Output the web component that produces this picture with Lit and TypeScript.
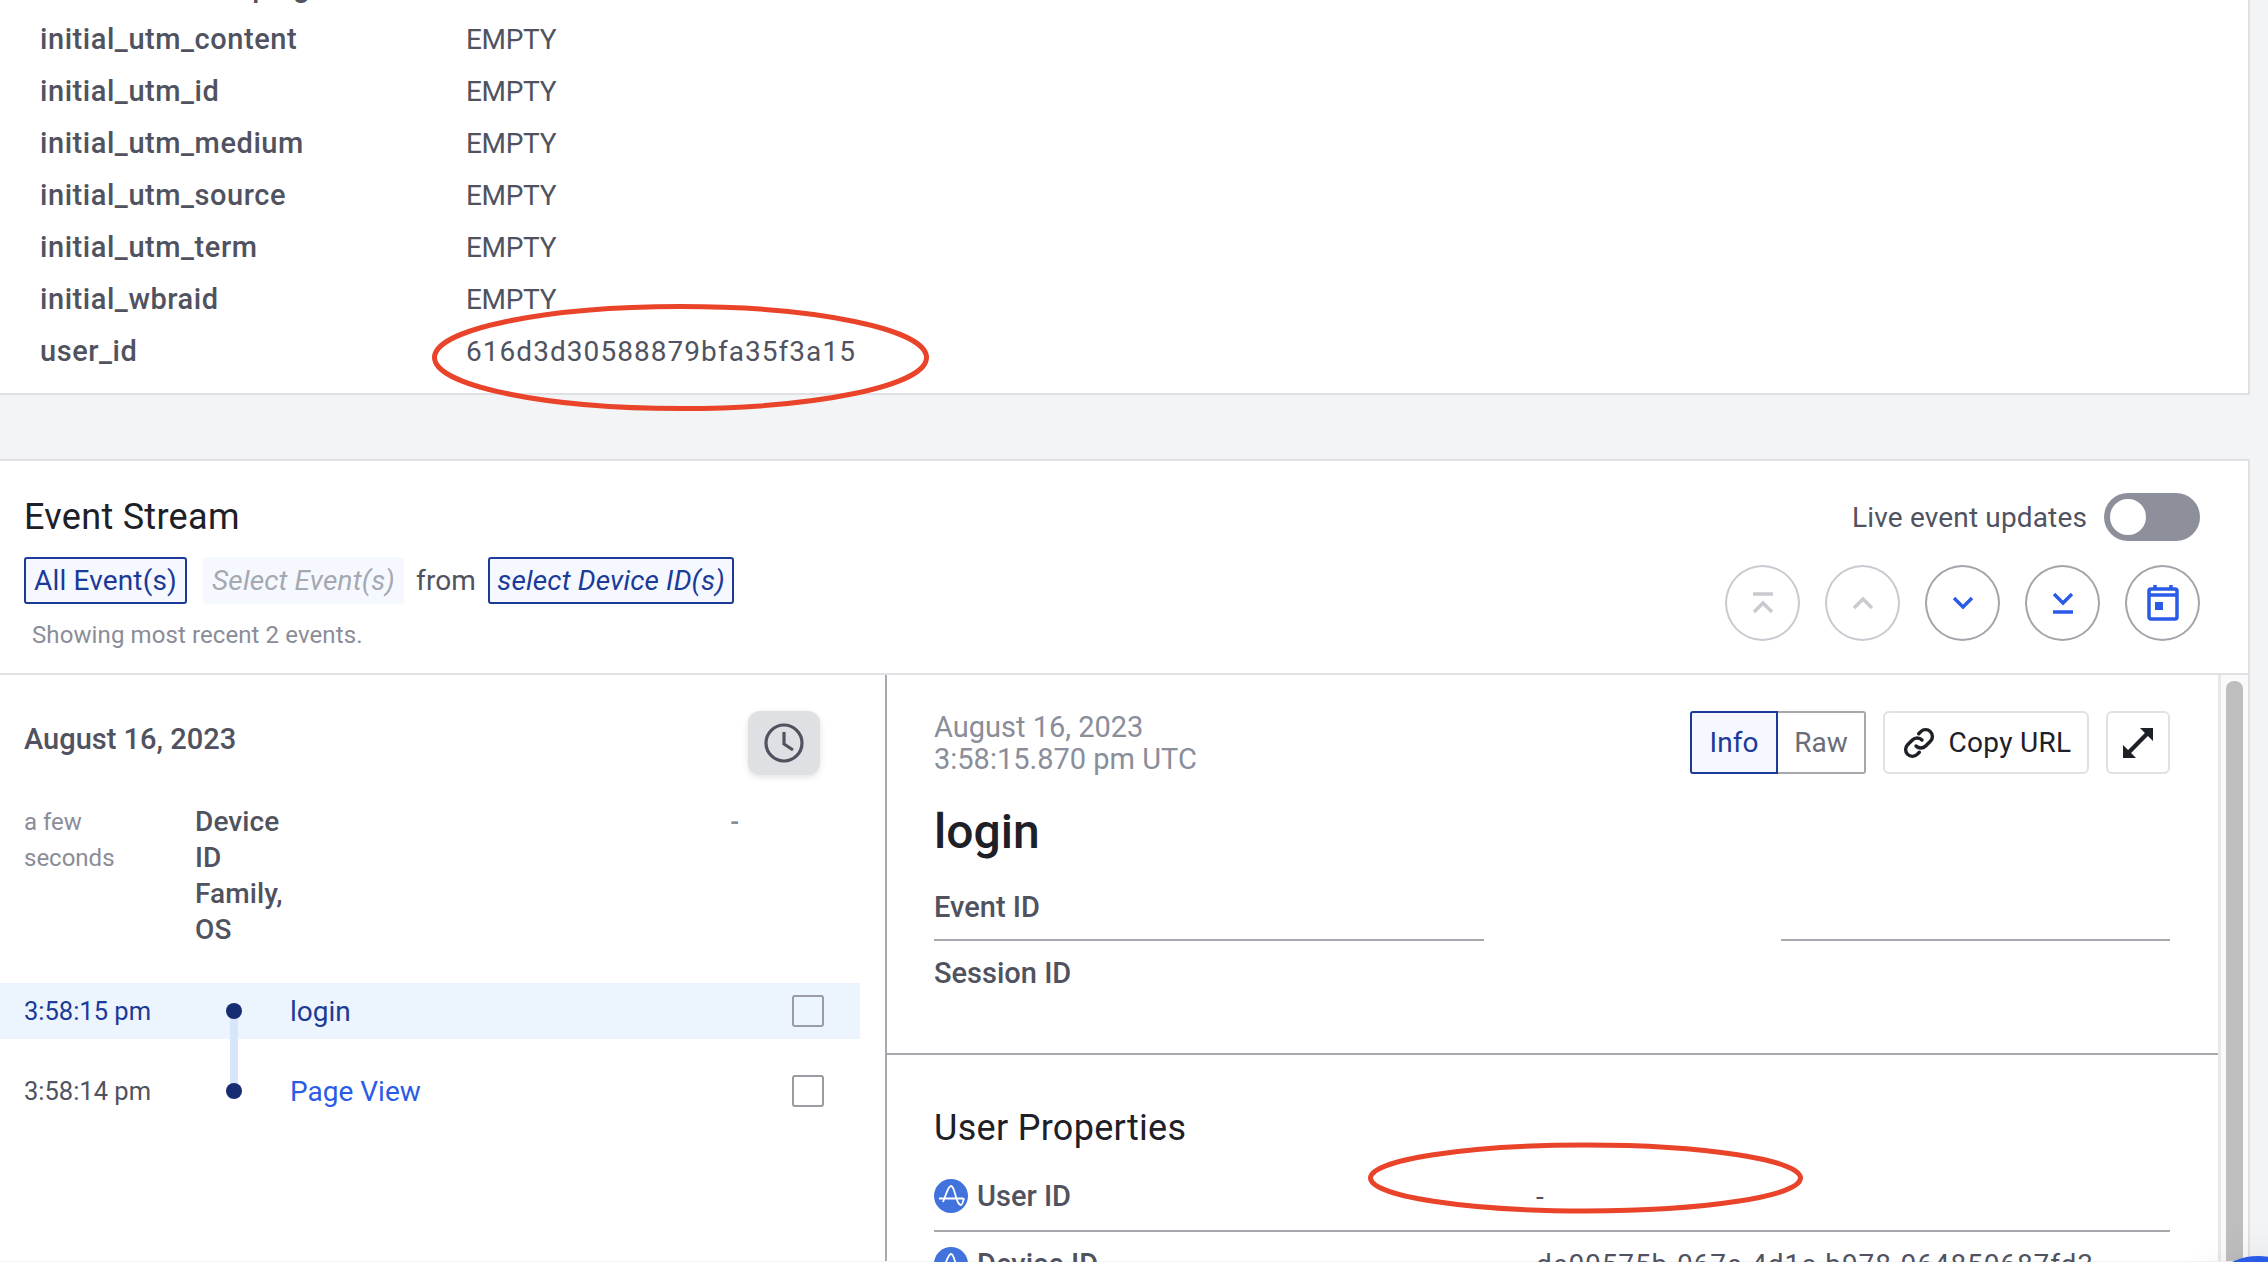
import { LitElement, html, css, svg } from "lit";
import { customElement } from "lit/decorators.js";

const rows: [string, string][] = [
  ["initial_utm_campaign", "EMPTY"],
  ["initial_utm_content", "EMPTY"],
  ["initial_utm_id", "EMPTY"],
  ["initial_utm_medium", "EMPTY"],
  ["initial_utm_source", "EMPTY"],
  ["initial_utm_term", "EMPTY"],
  ["initial_wbraid", "EMPTY"],
  ["user_id", "616d3d30588879bfa35f3a15"],
];

const amp = svg`<svg class="amp" viewBox="0 0 34 34"><circle cx="17" cy="17" r="17" fill="#4272dc"/><path d="M5 19.500h24M9 23c3-7 5-16 8-16s4 9 6 14c1 3 3 5 4 5s2-3 3-7" fill="none" stroke="#fff" stroke-width="1.800"/></svg>`;

@customElement("app-root")
export class AppRoot extends LitElement {
  static styles = css`
    :host { display: block; position: relative; width: 2268px; height: 1262px; overflow: hidden; background: #f3f4f6; font-family: Roboto, "Liberation Sans", sans-serif; font-size: 28px; color: #50535f; }
    * { box-sizing: border-box; }
    .props { width: 2250px; height: 434px; margin-top: -39px; padding-bottom: 16px; background: #fff; border-right: 2px solid #e0e1e5; border-bottom: 2px solid #e0e1e5; }
    .prop { display: grid; grid-template-columns: 466px 1fr; height: 52px; align-items: center; }
    .prop b { font-weight: 500; padding-left: 40px; font-size: 29px; letter-spacing: .55px; }
    .prop span { font-weight: 400; letter-spacing: -.3px; }
    .prop .hex { letter-spacing: 1.050px; }
    .stream { width: 2250px; height: 802px; margin-top: 64px; background: #fff; border-top: 2px solid #e0e1e5; border-right: 2px solid #e0e1e5; display: flex; flex-direction: column; }
    .head { height: 214px; flex: none; border-bottom: 2px solid #e0e1e5; padding: 32px 48px 0 24px; display: flex; justify-content: space-between; }
    h2 { margin: 0; font-weight: 400; font-size: 36px; letter-spacing: .3px; line-height: 48px; color: #1e2027; }
    .head h2 { height: 64px; }
    .chips { display: flex; align-items: center; height: 47px; letter-spacing: .15px; }
    .chip { height: 47px; display: flex; align-items: center; justify-content: center; border: 2px solid #1c3a97; border-radius: 3px; background: #f5f9ff; color: #1c3a97; }
    .c1 { width: 163px; margin-right: 16px; }
    .c2 { width: 201px; border-color: #f5f9ff; color: #a6a8b0; font-style: italic; margin-right: 12px; }
    .c3 { width: 246px; font-style: italic; margin-left: 12px; }
    .from { color: #50535f; }
    .note { margin: 15px 0 0 8px; font-size: 24px; letter-spacing: .1px; line-height: 32px; color: #8a8d97; }
    .hr { display: flex; flex-direction: column; align-items: flex-end; }
    .live { display: flex; align-items: center; gap: 17px; height: 48px; letter-spacing: .15px; }
    .toggle { width: 96px; height: 48px; border-radius: 24px; background: #8d8f9a; padding: 6px; }
    .toggle i { display: block; width: 36px; height: 36px; border-radius: 50%; background: #fff; }
    .circles { display: flex; gap: 25px; margin-top: 24px; }
    .circle { width: 75px; height: 76px; border-radius: 50%; border: 2px solid #a3a5ab; display: flex; align-items: center; justify-content: center; }
    .circle.off { border-color: #c9cad0; }
    .body { display: flex; flex: 1; min-height: 0; }
    .left { width: 887px; flex: none; border-right: 2px solid #a6a8ae; padding-top: 36px; }
    .lhead { display: flex; justify-content: space-between; padding: 0 65px 0 24px; height: 64px; }
    .lhead b { font-weight: 500; font-size: 29px; line-height: 56px; }
    .clock { width: 72px; height: 64px; border-radius: 12px; background: #dfe0e3; box-shadow: 0 2px 6px rgba(0,0,0,.12); display: flex; align-items: center; justify-content: center; }
    .summary { display: grid; grid-template-columns: 171px 100px 1fr; padding-left: 24px; margin-top: 29px; line-height: 36px; height: 179px; }
    .summary .ago { font-size: 24px; color: #8a8d97; }
    .summary .fields { font-weight: 500; letter-spacing: .1px; }
    .summary .dash { padding-left: 435px; font-size: 24px; font-weight: 700; color: #8a8d97; }
    .ev { height: 56px; display: flex; align-items: center; width: 860px; position: relative; font-size: 28px; }
    .ev.sel { background: #ecf4fe; color: #1c3a97; }
    .ev + .ev { margin-top: 24px; }
    .ev .t { width: 290px; padding-left: 24px; font-size: 25.500px; }
    .ev .box { width: 32px; height: 32px; border: 2px solid #9a9ca3; border-radius: 3px; background: #fff; margin-left: auto; margin-right: 36px; flex: none; }
    .ev.sel .box { background: transparent; }
    .dot { position: absolute; left: 226px; top: 20px; width: 16px; height: 16px; border-radius: 50%; background: #172d73; z-index: 1; }
    .rail { position: absolute; left: 230px; top: 28px; width: 8px; height: 80px; background: #d7e6fb; }
    .name-a { color: #1c3a97; }
    .name-b { color: #2a5be6; }
    .right { flex: 1; min-width: 0; display: flex; }
    .detail { width: 1331px; flex: none; }
    .track { flex: 1; background: #fafafa; border-left: 3px solid #e8e8e8; padding: 6px 5px 0 5px; }
    .thumb { height: 100%; border-radius: 8px 8px 0 0; background: #bebebe; }
    .top { height: 380px; border-bottom: 2px solid #a6a8ae; padding: 36px 48px 0 47px; }
    .tophead { display: flex; justify-content: space-between; height: 65px; }
    .when { color: #8a8d9a; line-height: 32px; font-size: 29px; }
    .tools { display: flex; }
    .seg { width: 88px; height: 63px; display: flex; align-items: center; justify-content: center; border: 2px solid #a6a8ae; color: #6a6d78; }
    .seg.on { background: #f5f9ff; border-color: #1c3a97; color: #1c3a97; border-radius: 3px 0 0 3px; }
    .seg.off { border-left: 0; border-radius: 0 3px 3px 0; }
    .btn { height: 63px; border: 2px solid #e0e1e5; border-radius: 6px; display: flex; align-items: center; justify-content: center; color: #1e2027; margin-left: 17px; gap: 12px; letter-spacing: .3px; }
    .copy { width: 206px; }
    .exp { width: 64px; }
    h1 { margin: 24px 0 0; font-size: 48px; line-height: 64px; font-weight: 500; color: #1e2027; }
    .kv { display: flex; align-items: center; font-weight: 500; font-size: 29px; height: 38px; }
    .ids { margin-top: 24px; }
    .line { height: 2px; margin-top: 13px; display: flex; justify-content: space-between; }
    .line i { display: block; height: 2px; background: #a6a8ae; }
    .line .a { width: 550px; }
    .line .b { width: 389px; }
    .sess { margin-top: 13px; }
    .user { padding: 51px 48px 0 47px; }
    .user h2 { line-height: 44px; }
    .urow { display: grid; grid-template-columns: 602px 1fr; height: 70px; align-items: center; border-bottom: 2px solid #a6a8ae; margin-top: 12px; }
    .urow + .urow { margin-top: 0; border-bottom: 0; height: 64px; }
    .ukey { display: flex; align-items: center; gap: 9px; font-weight: 500; font-size: 29px; }
    .uval { color: #50535f; letter-spacing: .9px; }
    .amp { width: 34px; height: 34px; flex: none; }
    .ink { position: absolute; left: 0; top: 0; pointer-events: none; }
    .bubble { position: absolute; left: 2199px; top: 1256px; width: 118px; height: 118px; border-radius: 50%; background: #2a5be6; box-shadow: 0 0 40px rgba(0,0,0,.08); }
  `;

  render() {
    return html`
      <section class="props">
        ${rows.map(([k, v]) => html`<div class="prop"><b>${k}</b><span class=${v === "EMPTY" ? "" : "hex"}>${v}</span></div>`)}
      </section>
      <section class="stream">
        <div class="head">
          <div>
            <h2>Event Stream</h2>
            <div class="chips">
              <div class="chip c1">All Event(s)</div>
              <div class="chip c2">Select Event(s)</div>
              <span class="from">from</span>
              <div class="chip c3">select Device ID(s)</div>
            </div>
            <div class="note">Showing most recent 2 events.</div>
          </div>
          <div class="hr">
            <div class="live"><span>Live event updates</span><div class="toggle"><i></i></div></div>
            <div class="circles">
              <div class="circle off"><svg width="30" height="30" viewBox="0 0 30 30" fill="none" stroke="#c9cad0" stroke-width="3.400"><path d="M5 6h20M6 24l9-9 9 9"/></svg></div>
              <div class="circle off"><svg width="30" height="30" viewBox="0 0 30 30" fill="none" stroke="#c9cad0" stroke-width="3.400"><path d="M6 20l9-9 9 9"/></svg></div>
              <div class="circle"><svg width="30" height="30" viewBox="0 0 30 30" fill="none" stroke="#2a5be6" stroke-width="3.400"><path d="M6 10l9 9 9-9"/></svg></div>
              <div class="circle"><svg width="30" height="30" viewBox="0 0 30 30" fill="none" stroke="#2a5be6" stroke-width="3.400"><path d="M6 6l9 9 9-9M5 24h20"/></svg></div>
              <div class="circle"><svg width="32" height="36" viewBox="0 0 32 36" fill="none"><path d="M8 0v5M24 0v5" stroke="#2a5be6" stroke-width="3.500"/><rect x="2" y="4" width="28" height="30" rx="2" stroke="#2a5be6" stroke-width="3.500"/><path d="M2 10h28" stroke="#2a5be6" stroke-width="3.500"/><rect x="8" y="17" width="8" height="8" fill="#2a5be6"/></svg></div>
            </div>
          </div>
        </div>
        <div class="body">
          <div class="left">
            <div class="lhead">
              <b>August 16, 2023</b>
              <div class="clock"><svg width="40" height="40" viewBox="0 0 40 40" fill="none" stroke="#50535f" stroke-width="3.200"><circle cx="20" cy="20" r="18"/><path d="M20 9v12l9 6"/></svg></div>
            </div>
            <div class="summary">
              <div class="ago">a few<br />seconds</div>
              <div class="fields">Device<br />ID<br />Family,<br />OS</div>
              <div class="dash">-</div>
            </div>
            <div class="ev sel">
              <div class="t">3:58:15 pm</div><span class="dot"></span><span class="rail"></span>
              <span class="name-a">login</span><span class="box"></span>
            </div>
            <div class="ev">
              <div class="t">3:58:14 pm</div><span class="dot"></span>
              <span class="name-b">Page View</span><span class="box"></span>
            </div>
          </div>
          <div class="right">
            <div class="detail">
              <div class="top">
                <div class="tophead">
                  <div class="when">August 16, 2023<br />3:58:15.870 pm UTC</div>
                  <div class="tools">
                    <div class="seg on">Info</div><div class="seg off">Raw</div>
                    <div class="btn copy"><svg width="36" height="36" viewBox="0 0 24 24" fill="none" stroke="#1e2027" stroke-width="2.300" stroke-linecap="round"><path d="M10 14a4.500 4.500 0 0 0 6.400 0l3.200-3.200a4.500 4.500 0 0 0-6.400-6.400L11.800 5.800"/><path d="M14 10a4.500 4.500 0 0 0-6.400 0l-3.200 3.200a4.500 4.500 0 0 0 6.400 6.400l1.400-1.400"/></svg><span>Copy URL</span></div>
                    <div class="btn exp"><svg width="30" height="30" viewBox="0 0 30 30" fill="#1e2027"><path d="M30 0v13l-5.100-4.900L8.100 24.900 13 30H0V17l5.100 4.900L21.900 5.100 17 0z"/></svg></div>
                  </div>
                </div>
                <h1>login</h1>
                <div class="ids">
                  <div class="kv">Event ID</div>
                  <div class="line"><i class="a"></i><i class="b"></i></div>
                  <div class="kv sess">Session ID</div>
                </div>
              </div>
              <div class="user">
                <h2>User Properties</h2>
                <div class="urow"><div class="ukey">${amp}User ID</div><div class="uval">-</div></div>
                <div class="urow"><div class="ukey">${amp}Device ID</div><div class="uval">de00575b-067e-4d1c-b978-064850687fd3</div></div>
              </div>
            </div>
            <div class="track"><div class="thumb"></div></div>
          </div>
        </div>
      </section>
      <div class="bubble"></div>
      <svg class="ink" width="2268" height="1262" fill="none" stroke="#e9432a" stroke-width="5">
        <ellipse cx="680.500" cy="357.500" rx="246" ry="51"/>
        <ellipse cx="1585.500" cy="1178" rx="215" ry="33"/>
      </svg>
    `;
  }
}
